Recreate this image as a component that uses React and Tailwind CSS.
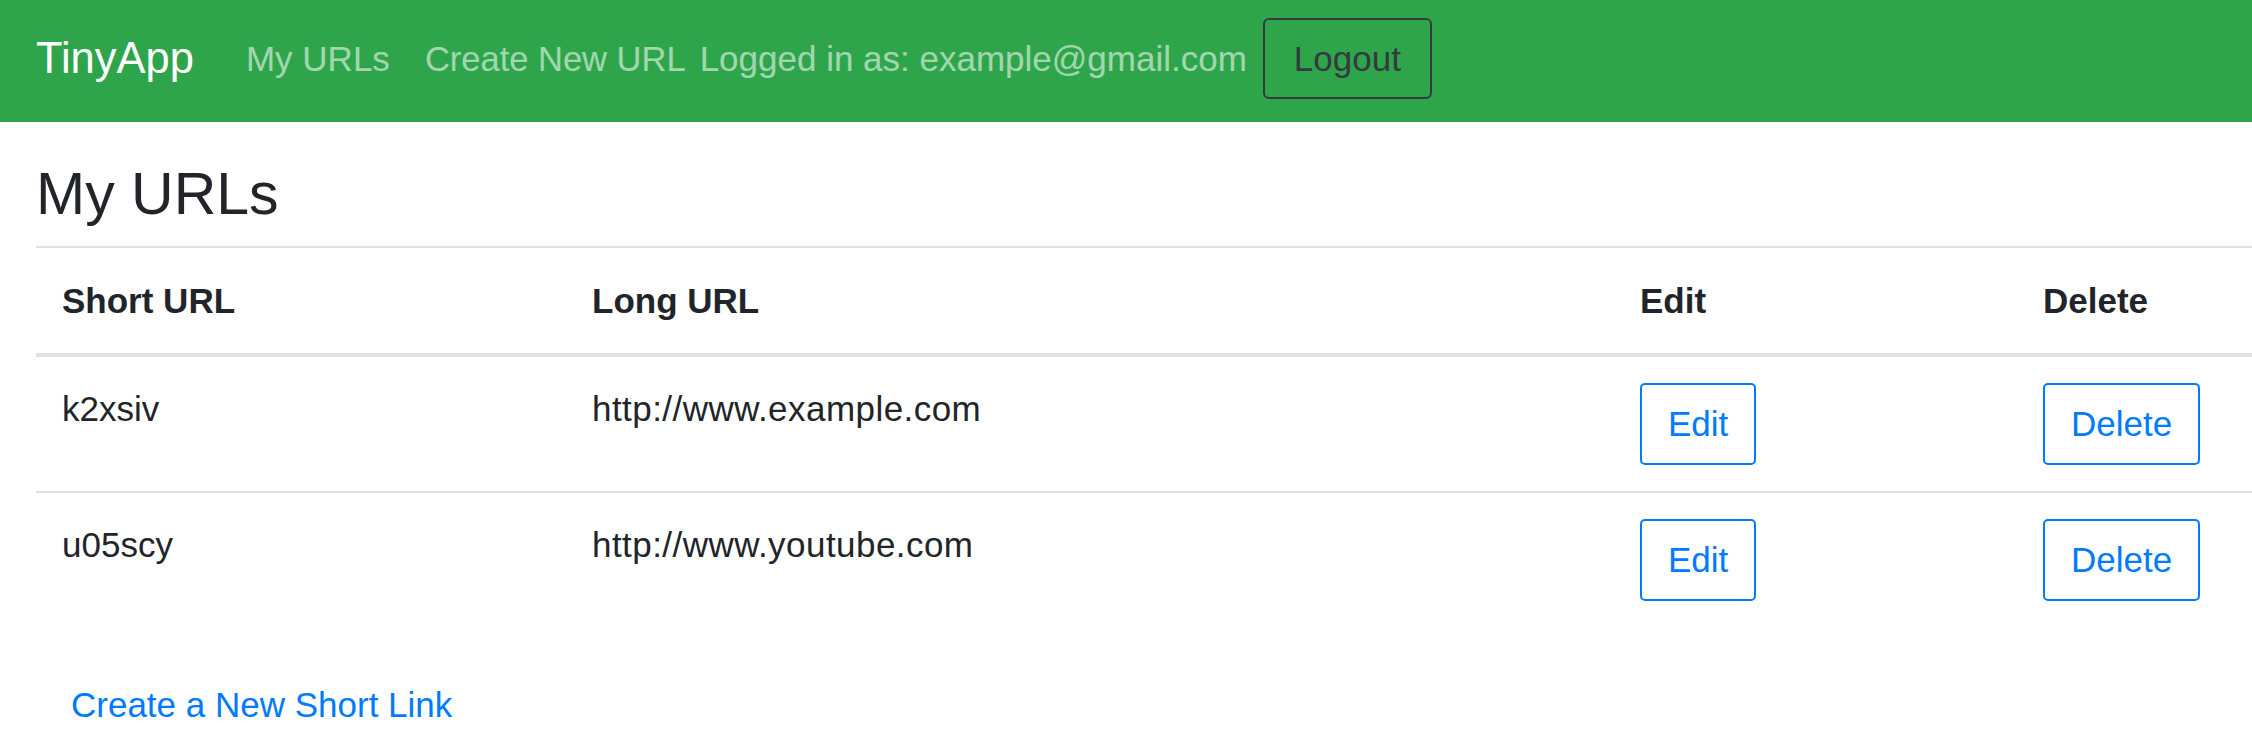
import React from "react";

const rows = [
  { short: "k2xsiv", long: "http://www.example.com" },
  { short: "u05scy", long: "http://www.youtube.com" },
];

function OutlineBtn({ children }) {
  return (
    <button className="inline-block rounded-[5px] border-2 border-[#007bff] bg-white px-[26px] py-[13px] text-[35px] leading-[52px] text-[#007bff]">
      {children}
    </button>
  );
}

export default function App() {
  return (
    <div
      className="min-h-[742px] w-full overflow-hidden bg-white text-[#212529]"
      style={{ fontFamily: '"Liberation Sans", Arial, Helvetica, sans-serif' }}
    >
      <nav className="flex h-[122px] items-center bg-[#2fa54b] px-[36px] pb-[5px]">
        <span className="mr-[35px] text-[43.5px] leading-[65px] text-white">TinyApp</span>
        <a className="pl-[17px] pr-[17px] text-[35px] leading-[52px] text-white/55">My URLs</a>
        <a className="pl-[18px] pr-[14px] text-[34.5px] leading-[52px] text-white/55">Create New URL</a>
        <span className="text-[35px] leading-[52px] text-white/55">
          Logged in as: example@gmail.com
        </span>
        <button className="ml-[16px] rounded-[6px] border-2 border-[#343a40] px-[29px] py-[13px] text-[35px] leading-[51px] text-[#343a40]">
          Logout
        </button>
      </nav>

      <main className="pl-[36px] pt-[36px]">
        <h3 className="mb-[15px] text-[59px] font-normal leading-[73px] text-[#212529]">My URLs</h3>
        <table className="w-full table-fixed border-collapse text-left text-[35px] leading-[52px]">
          <colgroup>
            <col className="w-[530px]" />
            <col className="w-[1048px]" />
            <col className="w-[403px]" />
            <col />
          </colgroup>
          <thead>
            <tr>
              <th className="border-t-2 border-b-4 border-[#dee2e6] px-[26px] pt-[27px] pb-[26px] align-bottom font-bold">Short URL</th>
              <th className="border-t-2 border-b-4 border-[#dee2e6] px-[26px] pt-[27px] pb-[26px] align-bottom font-bold">Long URL</th>
              <th className="border-t-2 border-b-4 border-[#dee2e6] px-[26px] pt-[27px] pb-[26px] align-bottom font-bold">Edit</th>
              <th className="border-t-2 border-b-4 border-[#dee2e6] px-[26px] pt-[27px] pb-[26px] align-bottom font-bold">Delete</th>
            </tr>
          </thead>
          <tbody>
            {rows.map((r, i) => (
              <tr key={r.short}>
                <td className={`${i > 0 ? "border-t-2 border-[#dee2e6]" : ""} p-[26px] align-top`}>{r.short}</td>
                <td className={`${i > 0 ? "border-t-2 border-[#dee2e6]" : ""} p-[26px] align-top tracking-[0.45px]`}>{r.long}</td>
                <td className={`${i > 0 ? "border-t-2 border-[#dee2e6]" : ""} p-[26px] align-top`}>
                  <OutlineBtn>Edit</OutlineBtn>
                </td>
                <td className={`${i > 0 ? "border-t-2 border-[#dee2e6]" : ""} p-[26px] align-top`}>
                  <OutlineBtn>Delete</OutlineBtn>
                </td>
              </tr>
            ))}
          </tbody>
        </table>
        <div className="mt-[35px]">
          <a className="inline-block px-[35px] py-[17px] text-[35px] leading-[52px] text-[#007bff]">
            Create a New Short Link
          </a>
        </div>
      </main>
    </div>
  );
}
